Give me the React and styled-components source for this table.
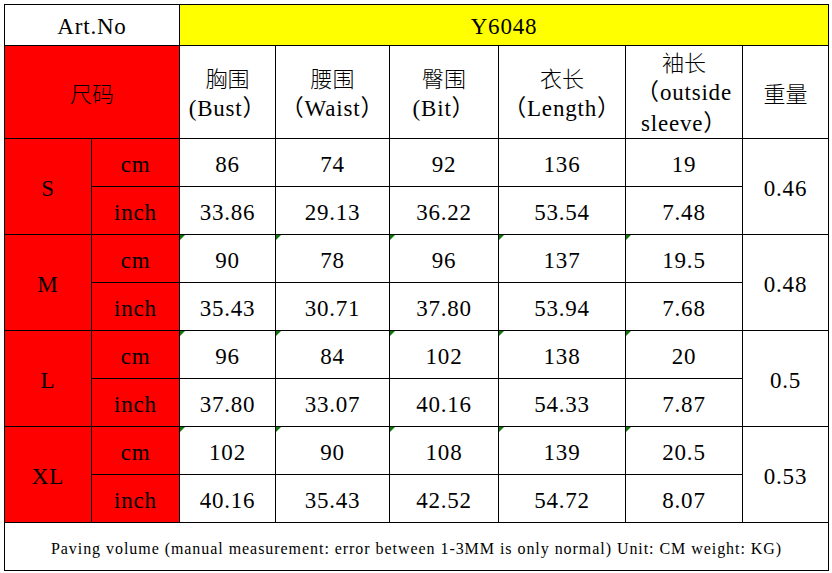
import styled, { createGlobalStyle, css } from "styled-components";

const GlobalStyle = createGlobalStyle`
  body {
    margin: 0;
    background: #fff;
    font-family: "Liberation Serif", "Noto Sans CJK SC", serif;
  }
`;

const Page = styled.div`
  padding: 4px 0 0 4px;
`;

const Sheet = styled.div`
  display: grid;
  grid-template-columns: 86px 87px 95px 113px 108px 126px 116px 85px;
  grid-template-rows: 40px 92px repeat(9, 47px);
  gap: 1px;
  padding: 1px;
  width: max-content;
  background: #000;
`;

const Cell = styled.div`
  position: relative;
  display: flex;
  flex-direction: column;
  align-items: center;
  justify-content: center;
  text-align: center;
  background: ${(p) => p.$fill || "#fff"};
  color: #000;
  font-size: ${(p) => p.$size || "23px"};
  letter-spacing: ${(p) => p.$track || "0.8px"};
  line-height: 31px;
  padding-top: 3px;
  white-space: pre;
  grid-column: ${(p) => (p.$cols ? `span ${p.$cols}` : "auto")};
  grid-row: ${(p) => (p.$rows ? `span ${p.$rows}` : "auto")};
  ${(p) =>
    p.$flag &&
    css`
      &::before {
        content: "";
        position: absolute;
        top: 0;
        left: 0;
        border-top: 5px solid #0b7a0b;
        border-right: 5px solid transparent;
      }
    `}
`;

const Han = styled.span`
  font-family: "Noto Sans CJK SC", sans-serif;
  font-size: 22px;
  font-weight: 300;
  letter-spacing: 0;
  margin-top: -2px;
`;

const RED = "#ff0000";
const YELLOW = "#ffff00";

const sizes = [
  { name: "S", cm: ["86", "74", "92", "136", "19"], inch: ["33.86", "29.13", "36.22", "53.54", "7.48"], weight: "0.46", flag: false },
  { name: "M", cm: ["90", "78", "96", "137", "19.5"], inch: ["35.43", "30.71", "37.80", "53.94", "7.68"], weight: "0.48", flag: true },
  { name: "L", cm: ["96", "84", "102", "138", "20"], inch: ["37.80", "33.07", "40.16", "54.33", "7.87"], weight: "0.5", flag: true },
  { name: "XL", cm: ["102", "90", "108", "139", "20.5"], inch: ["40.16", "35.43", "42.52", "54.72", "8.07"], weight: "0.53", flag: true },
];

const headers = [
  { zh: "胸围", en: ["(Bust）"] },
  { zh: "腰围", en: ["（Waist）"] },
  { zh: "臀围", en: ["(Bit）"] },
  { zh: "衣长", en: ["（Length）"] },
  { zh: "袖长", en: ["（outside", "sleeve）"] },
];

export default function App() {
  return (
    <>
      <GlobalStyle />
      <Page>
        <Sheet>
          <Cell $cols={2}>Art.No</Cell>
          <Cell $cols={6} $fill={YELLOW}>Y6048</Cell>

          <Cell $cols={2} $fill={RED}>
            <Han>尺码</Han>
          </Cell>
          {headers.map((h) => (
            <Cell key={h.zh}>
              <Han>{h.zh}</Han>
              {h.en.map((line) => (
                <span key={line}>{line}</span>
              ))}
            </Cell>
          ))}
          <Cell>
            <Han>重量</Han>
          </Cell>

          {sizes.map((s) => [
            <Cell key={s.name} $rows={2} $fill={RED}>{s.name}</Cell>,
            <Cell key={s.name + "cm"} $fill={RED}>cm</Cell>,
            ...s.cm.map((v, i) => (
              <Cell key={s.name + "c" + i} $flag={s.flag}>{v}</Cell>
            )),
            <Cell key={s.name + "w"} $rows={2}>{s.weight}</Cell>,
            <Cell key={s.name + "in"} $fill={RED}>inch</Cell>,
            ...s.inch.map((v, i) => <Cell key={s.name + "i" + i}>{v}</Cell>),
          ])}

          <Cell $cols={8} $size="16px" $track="0.95px">
            Paving volume (manual measurement: error between 1-3MM is only normal) Unit: CM weight: KG)
          </Cell>
        </Sheet>
      </Page>
    </>
  );
}
